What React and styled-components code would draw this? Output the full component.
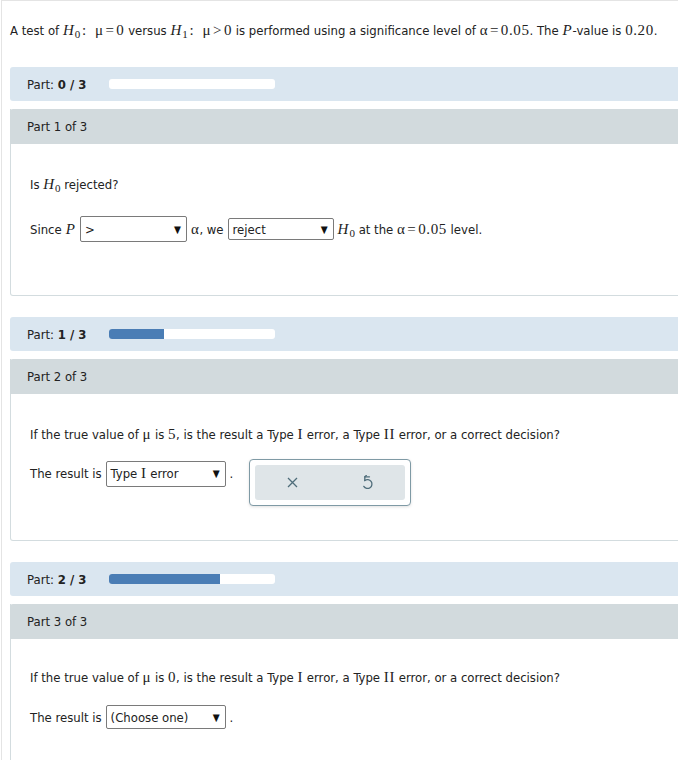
import React from "react";
import styled, { createGlobalStyle } from "styled-components";

const Global = createGlobalStyle`
  body {
    margin: 0;
    overflow: hidden;
    background: #fff;
    font-family: "DejaVu Sans Condensed", "DejaVu Sans", sans-serif;
    font-stretch: condensed;
    font-size: 13px;
    color: #222;
  }
`;

const Page = styled.div`
  margin-left: 1px;
  width: 720px;
  border-top: 1px solid #e4e4e4;
  border-left: 1px solid #e4e4e4;
  padding-left: 8px;
`;

const Intro = styled.div`
  padding-top: 20px;
  height: 20px;
  line-height: 20px;
  margin-bottom: 26px;
  white-space: nowrap;
`;

const M = styled.span`
  font-family: "Liberation Serif", serif;
  font-size: 15px;
  line-height: 1;
  letter-spacing: 0.6px;
  font-stretch: normal;
`;

const V = styled.i`
  font-family: "Liberation Serif", serif;
  font-size: 15px;
  line-height: 1;
  margin-right: 1px;
`;

const Sub = styled.sub`
  font-family: "Liberation Serif", serif;
  font-size: 11px;
  font-style: normal;
  vertical-align: -3px;
  line-height: 0;
`;

const Progress = styled.div`
  display: flex;
  align-items: center;
  height: 34px;
  padding-left: 17px;
  background: #dae6f0;
  border-radius: 3px 0 0 3px;
`;

const ProgressLabel = styled.div`
  width: 82px;
  b {
    font-weight: bold;
  }
`;

const Track = styled.div`
  width: 166px;
  height: 10px;
  background: #fff;
  border-radius: 3px;
  overflow: hidden;
`;

const Fill = styled.div`
  height: 100%;
  background: #4a7db5;
`;

const Panel = styled.div`
  margin-top: 8px;
  margin-bottom: ${(p) => p.$after}px;
  border: 1px solid #d3dcdf;
  border-top: none;
  border-radius: 0 0 3px 3px;
`;

const PanelHead = styled.div`
  height: 35px;
  display: flex;
  align-items: center;
  padding-left: 17px;
  margin: 0 -1px;
  background: #d2dadd;
  border-radius: 3px 3px 0 0;
`;

const Body = styled.div`
  padding: ${(p) => p.$top}px 0 ${(p) => p.$bottom}px 19px;
`;

const Question = styled.div`
  height: 20px;
  line-height: 20px;
  white-space: nowrap;
`;

const Row = styled.div`
  display: flex;
  align-items: flex-start;
  margin-top: ${(p) => p.$gap}px;
  white-space: nowrap;
`;

const Line = styled.span`
  display: inline-flex;
  align-items: center;
  height: ${(p) => p.$h}px;
  gap: 4px;
`;

const Dropdown = styled.span`
  display: inline-flex;
  align-items: center;
  justify-content: space-between;
  box-sizing: border-box;
  width: ${(p) => p.$w}px;
  height: ${(p) => p.$h}px;
  padding: 0 5px 0 4px;
  border: 1px solid #7a7a7a;
  border-radius: 2px;
  background: #fff;
  color: #222;
`;

const Arrow = styled.span`
  font-size: 10px;
  color: #111;
`;

const Actions = styled.div`
  margin-left: 16px;
  margin-top: -1px;
  padding: 5px;
  width: 150px;
  height: 35px;
  border: 1px solid #7f9aa5;
  border-radius: 4px;
  background: #fff;
  box-shadow: 0 1px 3px rgba(0, 0, 0, 0.12);
`;

const ActionInner = styled.div`
  display: flex;
  height: 100%;
  background: #dfe5e8;
  border-radius: 3px;
`;

const IconBtn = styled.span`
  flex: 1;
  display: flex;
  align-items: center;
  justify-content: center;
  color: #4f6d7a;
`;

function ProgressBar({ done }) {
  return (
    <Progress>
      <ProgressLabel>
        Part: <b>{done} / 3</b>
      </ProgressLabel>
      <Track>
        <Fill style={{ width: `${(done / 3) * 100}%` }} />
      </Track>
    </Progress>
  );
}

const H0 = () => (
  <>
    <V>H</V>
    <Sub>0</Sub>
  </>
);

function ResultRow({ value, withActions }) {
  return (
    <Row $gap={withActions ? 15 : 17}>
      <Line $h={withActions ? 27 : 24}>
        The result is
        <Dropdown $w={120} $h={withActions ? 26 : 24}>
          <span>{value}</span>
          <Arrow>▼</Arrow>
        </Dropdown>
        .
      </Line>
      {withActions && (
        <Actions>
          <ActionInner>
            <IconBtn>
              <svg width="11" height="11" viewBox="0 0 11 11" fill="none" stroke="currentColor" strokeWidth="1.3">
                <path d="M1 1 L10 10 M10 1 L1 10" />
              </svg>
            </IconBtn>
            <IconBtn>
              <svg width="12" height="15" viewBox="0 0 12 15" fill="none" stroke="currentColor" strokeWidth="1.3" strokeLinecap="round" strokeLinejoin="round">
                <path d="M7.5 1.8 H2.8 V5.6" />
                <path d="M2.8 5.6 A4.4 4.4 0 1 1 1.8 11.4" />
                <path d="M2.8 1.8 L4.3 0.6" />
              </svg>
            </IconBtn>
          </ActionInner>
        </Actions>
      )}
    </Row>
  );
}

export default function App() {
  return (
    <>
      <Global />
      <Page>
        <Intro>
          A test of <H0 />
          <M>{"\u200A:\u2002μ\u200A=\u200A0"}</M> versus <V>H</V>
          <Sub>1</Sub>
          <M>{"\u200A:\u2002μ\u200A>\u200A0"}</M> is performed using a significance level of{" "}
          <M>{"α\u200A=\u200A0.05"}</M>. The <V>P</V>-value is <M>0.20</M>.
        </Intro>

        <ProgressBar done={0} />
        <Panel $after={21}>
          <PanelHead>Part 1 of 3</PanelHead>
          <Body $top={31} $bottom={53}>
            <Question>
              Is <H0 /> rejected?
            </Question>
            <Row $gap={21}>
              <Line $h={26}>
                Since <V>P</V>
                <Dropdown $w={107} $h={26}>
                  <span>&gt;</span>
                  <Arrow>▼</Arrow>
                </Dropdown>
                <span>
                  <M>α</M>, we
                </span>
                <Dropdown $w={106} $h={22}>
                  <span>reject</span>
                  <Arrow>▼</Arrow>
                </Dropdown>
                <span>
                  <H0 /> at the <M>{"α\u200A=\u200A0.05"}</M> level.
                </span>
              </Line>
            </Row>
          </Body>
        </Panel>

        <ProgressBar done={1} />
        <Panel $after={21}>
          <PanelHead>Part 2 of 3</PanelHead>
          <Body $top={31} $bottom={34}>
            <Question>
              If the true value of <M>μ</M> is <M>5</M>, is the result a Type <M>I</M> error, a Type{" "}
              <M>II</M> error, or a correct decision?
            </Question>
            <ResultRow
              withActions
              value={
                <>
                  Type <M>I</M> error
                </>
              }
            />
          </Body>
        </Panel>

        <ProgressBar done={2} />
        <Panel $after={0}>
          <PanelHead>Part 3 of 3</PanelHead>
          <Body $top={29} $bottom={60}>
            <Question>
              If the true value of <M>μ</M> is <M>0</M>, is the result a Type <M>I</M> error, a Type{" "}
              <M>II</M> error, or a correct decision?
            </Question>
            <ResultRow value="(Choose one)" />
          </Body>
        </Panel>
      </Page>
    </>
  );
}
